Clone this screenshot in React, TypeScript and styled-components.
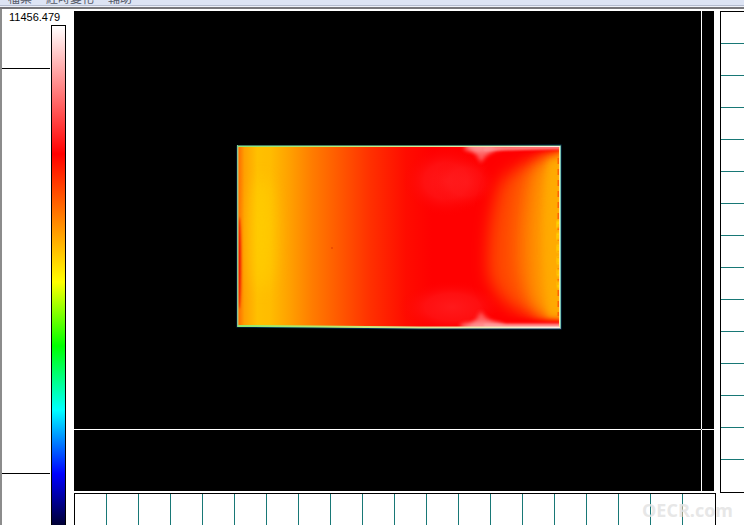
import React from 'react';
import styled, { createGlobalStyle } from 'styled-components';

const GlobalStyle = createGlobalStyle`
  *, *::before, *::after { box-sizing: border-box; }
  body { margin: 0; background: #fff; overflow: hidden; }
`;

const Window = styled.div`
  position: relative;
  display: flex;
  flex-direction: column;
  height: 100vh;
  overflow: hidden;
  color: #000;
`;

const MenuBar = styled.nav`
  display: flex;
  flex: none;
  align-items: flex-end;
  gap: 14px;
  height: 5px;
  padding: 0 8px;
  overflow: hidden;
  background: #dde4f4;
`;

const MenuButton = styled.button`
  flex: none;
  padding: 0;
  border: 0;
  background: none;
  color: #555a68;
  font: 12px/14px "Noto Sans CJK TC", sans-serif;
`;

const Divider = styled.div`
  flex: none;
  height: 4px;
  border-top: 1px solid #b4bccf;
  border-bottom: 2px solid #77777b;
  background: #eef1f9;
`;

const Workspace = styled.main`
  display: grid;
  flex: 1;
  grid-template-columns: 68px minmax(0, 1fr) 24px;
  grid-template-rows: minmax(0, 1fr) 32px;
  column-gap: 4px;
  min-height: 0;
  padding-top: 2px;
  border-left: 2px solid #8c8c8c;
`;

const ScalePanel = styled.aside`
  display: flex;
  flex-direction: column;
  grid-row: 1 / 3;
  min-height: 0;
  overflow: hidden;
`;

const ScaleValue = styled.output`
  flex: none;
  height: 14px;
  padding-left: 7px;
  font: 11px/13px "Liberation Sans", sans-serif;
  white-space: nowrap;
`;

const ScaleBody = styled.div`
  display: flex;
  flex: 1;
  gap: 1px;
  min-height: 0;
`;

const Limits = styled.div`
  display: flex;
  flex-direction: column;
  justify-content: space-between;
  width: 48px;
  padding: 43px 0 51px;
`;

const LimitMark = styled.hr`
  width: 100%;
  height: 1px;
  margin: 0;
  border: 0;
  background: #000;
`;

const ColorBar = styled.div`
  width: 15px;
  border: solid #000;
  border-width: 1px 1px 0;
  background: linear-gradient(
    #fff 0, #f00 128px, #ff0 256px, #0f0 320px, #0ff 384px, #00f 448px, #000 512px
  );
`;

const Viewer = styled.section`
  min-width: 0;
  min-height: 0;
  margin: 0 2px 2px 0;
  background: #000;
`;

const ThermalImage = styled.svg`
  display: block;
  width: 100%;
  height: 100%;
`;

const Ruler = styled.div<{ $axis: 'x' | 'y' }>`
  border: solid #000;
  border-width: ${({ $axis }) => ($axis === 'x' ? '1px 1px 0' : '1px 0 1px 1px')};
  background-image:
    linear-gradient(#fff, #fff),
    linear-gradient(
      ${({ $axis }) => ($axis === 'x' ? 'to right' : 'to bottom')},
      #fff 31px, #187876 31px
    );
  background-position: right bottom, left top;
  background-repeat: no-repeat, repeat;
  background-size: ${({ $axis }) => ($axis === 'x' ? '1px 100%' : '100% 1px')}, 32px 32px;
  grid-column: ${({ $axis }) => ($axis === 'x' ? 2 : 3)};
`;

const Watermark = styled.div`
  position: absolute;
  right: 11px;
  bottom: 4px;
  color: rgba(228, 228, 228, 0.9);
  font: 700 18px/22px "Open Sans", sans-serif;
`;

const menus = ['檔案', '經時變化', '輔助'];

const plate = 'M164 136 L486 135 L486 317 L345 317 L164 315 Z';

function HeatMap() {
  return (
    <ThermalImage viewBox="0 0 640 480" preserveAspectRatio="none" colorInterpolationFilters="sRGB" role="img" aria-label="Luminance map">
      <defs>
        <clipPath id="plate"><path d={plate} /></clipPath>
        <linearGradient id="base" gradientUnits="userSpaceOnUse" x1="164" x2="487" y1="0" y2="0">
          <stop offset="0" stopColor="#ff6800" />
          <stop offset=".02" stopColor="#ffa000" />
          <stop offset=".06" stopColor="#ffc000" />
          <stop offset=".1" stopColor="#ffbc00" />
          <stop offset=".16" stopColor="#ffa000" />
          <stop offset=".23" stopColor="#ff7c00" />
          <stop offset=".32" stopColor="#ff5600" />
          <stop offset=".41" stopColor="#ff3000" />
          <stop offset=".52" stopColor="#ff0c00" />
          <stop offset=".6" stopColor="#f00" />
          <stop offset="1" stopColor="#f00" />
        </linearGradient>
        <linearGradient id="edge" gradientUnits="userSpaceOnUse" x1="164" x2="487" y1="0" y2="0">
          <stop offset="0" stopColor="#90e870" />
          <stop offset=".3" stopColor="#b8ef70" />
          <stop offset=".65" stopColor="#e6e6a0" />
          <stop offset="1" stopColor="#fff0e4" />
        </linearGradient>
        <radialGradient id="warm">
          <stop offset="0" stopColor="#ff2022" stopOpacity=".8" />
          <stop offset=".5" stopColor="#ff1c1e" stopOpacity=".55" />
          <stop offset="1" stopColor="#f00" stopOpacity="0" />
        </radialGradient>
        <filter id="b1" x="-200%" y="-50%" width="500%" height="200%"><feGaussianBlur stdDeviation="1" /></filter>
        <filter id="b2" x="-50%" y="-80%" width="200%" height="260%"><feGaussianBlur stdDeviation="2" /></filter>
        <filter id="b3" x="-50%" y="-80%" width="200%" height="260%"><feGaussianBlur stdDeviation="3" /></filter>
        <filter id="b8" x="-60%" y="-60%" width="220%" height="220%"><feGaussianBlur stdDeviation="8" /></filter>
      </defs>
      <path d={plate} fill="none" stroke="#003058" strokeWidth="3" />
      <g clipPath="url(#plate)">
        <rect x="160" y="130" width="330" height="190" fill="url(#base)" />
        <ellipse cx="188" cy="222" rx="12" ry="56" fill="#ffd400" opacity=".6" filter="url(#b8)" />
        <ellipse cx="165" cy="252" rx="2" ry="46" fill="#f01800" filter="url(#b1)" />
        <ellipse cx="372" cy="170" rx="44" ry="36" fill="url(#warm)" />
        <ellipse cx="392" cy="171" rx="34" ry="28" fill="url(#warm)" opacity=".7" />
        <ellipse cx="378" cy="296" rx="54" ry="27" fill="url(#warm)" />
        <path d="M500 143 Q446 146 426 172 Q411 220 415 265 Q428 302 465 305 L500 305 Z" fill="#ff4800" filter="url(#b8)" />
        <path d="M510 143 Q462 143 450 168 Q438 215 442 260 Q449 295 470 303 L510 303 Z" fill="#ff7400" filter="url(#b8)" />
        <path d="M515 137 Q472 141 465 160 Q455 215 459 265 Q459 297 474 310 L515 310 Z" fill="#ffa500" opacity=".85" filter="url(#b8)" />
        <path d="M474 150 L492 144 V306 H474 Q465 225 474 150 Z" fill="#ffb000" opacity=".7" filter="url(#b3)" />
        <path d="M412 130 V137 Q440 144 490 138 V130 Z" fill="#f00" filter="url(#b2)" />
        <path d="M425 306 Q445 309 490 310 V322 H410 Z" fill="#f00" filter="url(#b2)" />
        <path d="M389 130 Q402 141 407 152 Q412 141 431 137 L487 136 V130 Z" fill="#ff7070" opacity=".85" filter="url(#b2)" />
        <ellipse cx="405" cy="137" rx="15" ry="4" fill="#ff9c9c" opacity=".8" filter="url(#b2)" />
        <path d="M410 136 L487 135 V138 L410 140 Z" fill="#ff9494" opacity=".8" filter="url(#b1)" />
        <path d="M388 322 Q402 311 407 300 Q411 311 435 314 L487 314 V322 Z" fill="#ff7070" opacity=".85" filter="url(#b2)" />
        <ellipse cx="408" cy="315" rx="22" ry="4" fill="#ffa0a0" opacity=".8" filter="url(#b2)" />
        <path d="M410 313 L487 313 V317 H410 Z" fill="#ffa4a4" opacity=".85" filter="url(#b1)" />
        <path d="M484.5 147 V305" stroke="#ff4800" strokeWidth="2" strokeDasharray="6 5" opacity=".75" />
        <path d="M484 210 l1 70" stroke="#ffe000" strokeWidth="3" strokeDasharray="7 5" filter="url(#b1)" />
        <path d="M258 236 v2" stroke="#db3900" strokeWidth="1" />
      </g>
      <g fill="none" strokeWidth="1">
        <path d="M163 134.5 H487" stroke="#467c64" />
        <path d="M164 135.5 H486" stroke="url(#edge)" />
        <path d="M163.5 134 V316" stroke="#87c38d" />
        <path d="M164.5 136 V315" stroke="#d0b860" opacity=".6" />
        <path d="M164 315 L240 315.5 L345 316.5 H487" stroke="url(#edge)" strokeWidth="2" />
        <path d="M486.5 135 V317" stroke="#74bdb0" />
        <path d="M485.5 136 V316" stroke="#ffe9a0" />
      </g>
      <path d="M0 418.5 H640 M627.5 0 V480" stroke="#fff" strokeWidth="1" shapeRendering="crispEdges" />
      <path d="M627 418.5 h1" stroke="#555" strokeWidth="1" shapeRendering="crispEdges" />
    </ThermalImage>
  );
}

export default function App() {
  return (
    <>
      <GlobalStyle />
      <Window>
        <MenuBar>
          {menus.map((label) => <MenuButton key={label} type="button">{label}</MenuButton>)}
        </MenuBar>
        <Divider />
        <Workspace>
          <ScalePanel>
            <ScaleValue>11456.479</ScaleValue>
            <ScaleBody>
              <Limits>
                <LimitMark />
                <LimitMark />
              </Limits>
              <ColorBar />
            </ScaleBody>
          </ScalePanel>
          <Viewer>
            <HeatMap />
          </Viewer>
          <Ruler $axis="y" />
          <Ruler $axis="x" />
        </Workspace>
        <Watermark>OECR.com</Watermark>
      </Window>
    </>
  );
}
